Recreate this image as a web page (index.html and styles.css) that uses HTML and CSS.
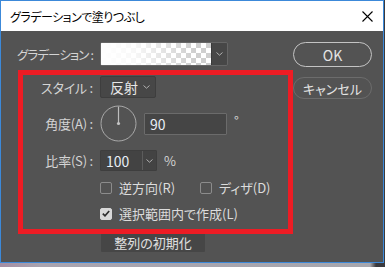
FILE: index.html
```html
<!DOCTYPE html>
<html lang="ja">
<head>
<meta charset="utf-8">
<link rel="stylesheet" href="styles.css">
</head>
<body>
<div class="window">
  <div class="titlebar">
    <span class="title">グラデーションで塗りつぶし</span>
    <svg class="close" width="11" height="11" viewBox="0 0 11 11"><path d="M0.5 0.5L10.5 10.5M10.5 0.5L0.5 10.5" stroke="#000" stroke-width="1.1" fill="none"/></svg>
  </div>
  <div class="content">
    <div class="form">
      <div class="row row-grad">
        <span class="label label-tight">グラデーション :</span>
        <div class="swatch">
          <div class="swatch-preview"></div>
          <div class="swatch-drop"><svg width="7" height="4" viewBox="0 0 7 4"><path d="M0.5 0.5L3.5 3.2L6.5 0.5" stroke="#b0b0b0" fill="none"/></svg></div>
        </div>
      </div>
      <div class="row row-style">
        <span class="label">スタイル :</span>
        <div class="select"><span>反射</span><svg width="7" height="4" viewBox="0 0 7 4"><path d="M0.5 0.5L3.5 3.2L6.5 0.5" stroke="#b0b0b0" fill="none"/></svg></div>
      </div>
      <div class="row row-angle">
        <span class="label">角度(A) :</span>
        <svg class="dial" width="37" height="37" viewBox="0 0 37 37"><circle cx="18.5" cy="18.5" r="17.5" stroke="#a9a9a9" stroke-width="1" fill="none"/><path d="M18.5 1.5V18.5" stroke="#bdbdbd" stroke-width="1.2"/><circle cx="18.5" cy="18.5" r="1.6" fill="#c4c4c4"/></svg>
        <div class="input input-angle">90</div>
        <span class="unit deg">°</span>
      </div>
      <div class="row row-ratio">
        <span class="label">比率(S) :</span>
        <div class="input input-ratio"><span class="val">100</span><span class="drop"><svg width="7" height="4" viewBox="0 0 7 4"><path d="M0.5 0.5L3.5 3.2L6.5 0.5" stroke="#b0b0b0" fill="none"/></svg></span></div>
        <span class="unit pct">%</span>
      </div>
      <div class="row row-check1">
        <label class="check check-first"><span class="box"></span><span>逆方向(R)</span></label>
        <label class="check"><span class="box"></span><span>ディザ(D)</span></label>
      </div>
      <div class="row row-check2">
        <label class="check"><span class="box checked"><svg width="8" height="7" viewBox="0 0 8 7"><path d="M0.8 3.6L3 5.8L7.2 1" stroke="#2e2e2e" stroke-width="1.7" fill="none"/></svg></span><span>選択範囲内で作成(L)</span></label>
      </div>
      <div class="row row-reset">
        <div class="reset">整列の初期化</div>
      </div>
    </div>
    <div class="buttons">
      <div class="btn btn-ok">OK</div>
      <div class="btn btn-cancel">キャンセル</div>
    </div>
  </div>
  <div class="highlight"></div>
</div>
</body>
</html>
```

FILE: styles.css
```css
html, body {
  margin: 0;
  padding: 0;
}
body {
  width: 385px;
  height: 267px;
  overflow: hidden;
  background: linear-gradient(90deg, #a58ea4 0px, #a9a4b0 40px, #a7a7ae 370px, #3a3a3e 376px);
  font-family: "Noto Sans CJK JP", "Noto Sans", sans-serif;
  font-feature-settings: "palt" 1;
}
.window {
  position: relative;
  width: 384px;
  height: 263px;
  box-sizing: border-box;
  border: 1px solid #3c89d9;
  background: #535353;
  display: flex;
  flex-direction: column;
}
.titlebar {
  height: 30px;
  background: #ffffff;
  display: flex;
  align-items: center;
  justify-content: space-between;
  padding: 0 10px 0 9px;
  flex-shrink: 0;
}
.title {
  font-size: 12px;
  color: #000;
  letter-spacing: -0.5px;
}
.close {
  display: block;
}
.content {
  display: flex;
  padding: 11px 0 0 17px;
}
.form {
  width: 275px;
  display: flex;
  flex-direction: column;
}
.row {
  display: flex;
  align-items: center;
}
.label {
  width: 77px;
  display: flex;
  justify-content: flex-end;
  font-size: 13px;
  color: #d4d4d4;
  margin-right: 5px;
  white-space: nowrap;
  letter-spacing: -0.2px;
  padding-right: 2px;
  box-sizing: border-box;
}
.label-tight {
  letter-spacing: -0.9px;
  font-size: 12.5px;
}
.row-grad { height: 24px; }
.swatch {
  width: 128px;
  height: 24px;
  box-sizing: border-box;
  border: 1px solid #666;
  border-radius: 2px;
  display: flex;
  overflow: hidden;
}
.swatch-preview {
  flex: 1;
  background:
    linear-gradient(90deg, #ffffff 0%, rgba(255,255,255,0.85) 30%, rgba(255,255,255,0) 85%),
    conic-gradient(#cfcfcf 25%, #ffffff 0 50%, #cfcfcf 0 75%, #ffffff 0) 0 0 / 10px 10px;
}
.swatch-drop {
  width: 15px;
  background: #474747;
  border-left: 1px solid #3a3a3a;
  display: flex;
  align-items: center;
  justify-content: center;
}
.row-style { margin-top: 10px; height: 22px; }
.select {
  width: 56px;
  height: 22px;
  box-sizing: border-box;
  border: 1px solid #3e3e3e;
  background: #474747;
  border-radius: 2px;
  display: flex;
  align-items: center;
  padding: 0 5px 0 9px;
  justify-content: space-between;
  font-size: 14px;
  color: #e6e6e6;
}
.row-angle { margin-top: 7px; height: 37px; }
.dial { display: block; margin-right: 7px; }
.input {
  box-sizing: border-box;
  border: 1px solid #6b6b6b;
  background: #454545;
  border-radius: 1px;
  color: #e8eef6;
  font-size: 14px;
  display: flex;
  align-items: center;
}
.input-angle {
  width: 83px;
  height: 22px;
  padding-left: 5px;
}
.unit {
  font-size: 13px;
  color: #d4d4d4;
}
.deg { margin-left: 7px; margin-top: -6px; }
.row-ratio { margin-top: 8px; height: 21px; }
.input-ratio {
  width: 57px;
  height: 21px;
  border-color: #3e3e3e;
  background: #434343;
}
.input-ratio .val {
  width: 42px;
  padding-left: 5px;
  box-sizing: border-box;
  border-right: 1px solid #5c5c5c;
  height: 100%;
  display: flex;
  align-items: center;
}
.input-ratio .drop {
  flex: 1;
  display: flex;
  align-items: center;
  justify-content: center;
}
.pct { margin-left: 7px; }
.row-check1 { margin-top: 10px; height: 13px; padding-left: 82px; }
.row-check2 { margin-top: 13px; height: 13px; padding-left: 82px; }
.check {
  display: flex;
  align-items: center;
  font-size: 13px;
  color: #dcdcdc;
}
.check-first { width: 100px; }
.box {
  width: 12px;
  height: 12px;
  box-sizing: border-box;
  border: 1px solid #8c8c8c;
  border-radius: 2px;
  margin-right: 7px;
  display: flex;
  align-items: center;
  justify-content: center;
}
.box.checked {
  background: #d8d8d8;
  border-color: #d8d8d8;
}
.row-reset { margin-top: 13px; padding-left: 83px; }
.reset {
  width: 104px;
  height: 19px;
  background: #464646;
  border-radius: 1px;
  font-size: 13px;
  color: #e0e0e0;
  display: flex;
  align-items: center;
  justify-content: center;
}
.buttons {
  display: flex;
  flex-direction: column;
  gap: 10px;
  width: 79px;
}
.btn {
  box-sizing: border-box;
  width: 79px;
  border-radius: 13px;
  display: flex;
  align-items: center;
  justify-content: center;
  color: #e4e4e4;
}
.btn-ok {
  height: 25px;
  border: 1.5px solid #c4c4c4;
  font-size: 14px;
}
.btn-cancel {
  height: 22px;
  border: 1.5px solid #6c6c6c;
  font-size: 13px;
}
.highlight {
  position: absolute;
  left: 17px;
  top: 69px;
  width: 275px;
  height: 164px;
  box-sizing: border-box;
  border: 5px solid #ed1c24;
  pointer-events: none;
}
```
